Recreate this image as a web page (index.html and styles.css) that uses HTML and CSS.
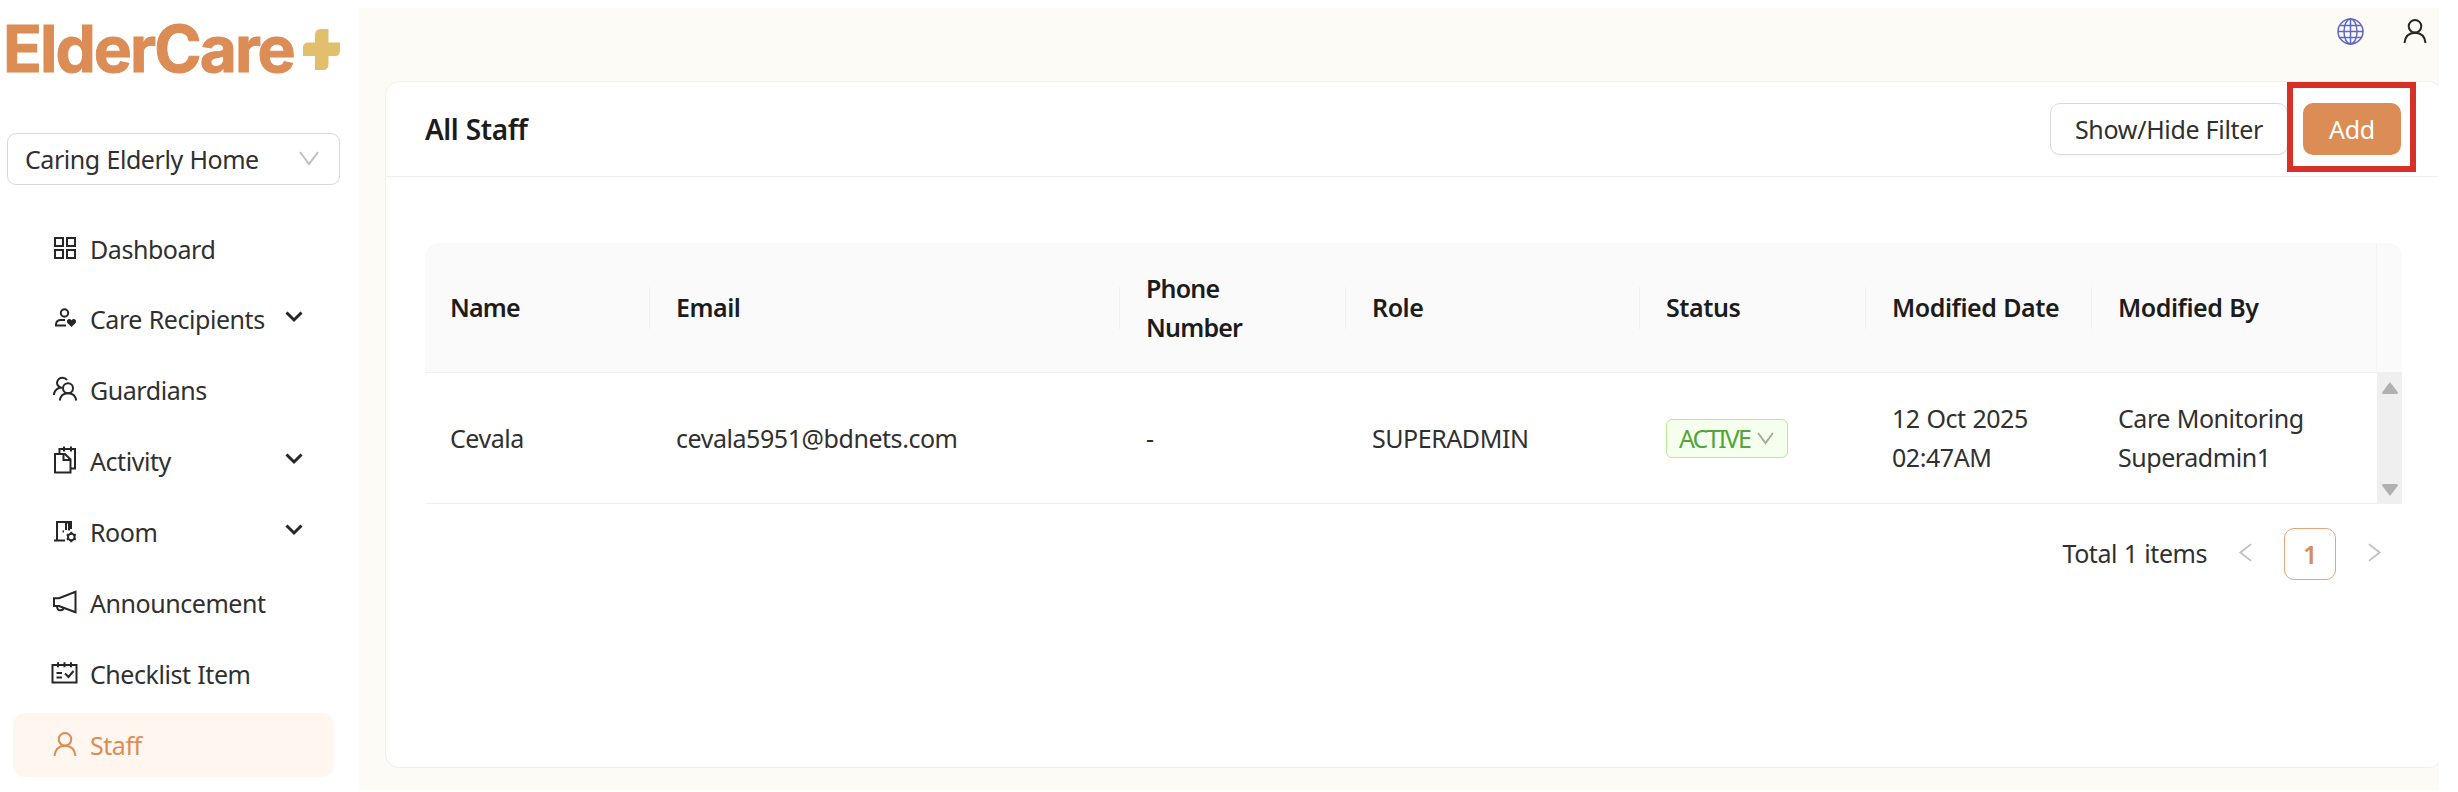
FILE: index.html
```
<!DOCTYPE html>
<html lang="en">
<head>
<meta charset="utf-8">
<title>ElderCare+ | All Staff</title>
<link rel="stylesheet" href="styles.css">
</head>
<body>
<div class="app">
  <aside class="sidebar">
    <div class="logo">
      <span class="logo-word">ElderCare</span>
      <svg class="logo-plus" viewBox="0 0 37 41"><path d="M18 0h7.500v13.500H37V22q0 5-5 5h-6.500v8q0 6-6 6H12V27H0v-8q0-5.500 5.500-5.500H12V6q0-6 6-6z"/></svg>
    </div>
    <div class="home-select">
      <span>Caring Elderly Home</span>
      <svg class="select-arrow" viewBox="0 0 20 14"><path d="M1 1l9 12 9-12"/></svg>
    </div>
    <nav class="menu">
      <a class="item"><svg class="icon" viewBox="0 0 24 24"><path d="M2 2h8v8H2zM14 2h8v8h-8zM2 14h8v8H2zM14 14h8v8h-8z"/></svg><span>Dashboard</span></a>
      <a class="item"><svg class="icon" viewBox="0 0 24 24"><circle cx="11.500" cy="7" r="3.700"/><path d="M13 19.500H3v-1.500q.5-4 5-4h4"/><path class="solid" d="M18.500 21l-4.300-4.200q-1-3.300 1.800-3.800 1.700 0 2.500 1.300.8-1.300 2.500-1.300 2.800.5 1.800 3.800z"/></svg><span>Care Recipients</span><svg class="caret" viewBox="0 0 18 12"><path d="M1.500 1.500L9 9l7.500-7.500"/></svg></a>
      <a class="item"><svg class="icon" viewBox="0 0 24 24"><circle cx="15" cy="11.200" r="5"/><path d="M6.800 23.500q1-7.300 8.200-7.300t8.200 7.300M9 11Q4 9.500 4 5.500 5 .7 9.500.7q3 0 4.500 2.300M.8 18q.5-5.500 6.500-7.500"/></svg><span>Guardians</span></a>
      <a class="item"><svg class="icon tall" viewBox="0 0 24 28"><path d="M2 8h10l5.500 5.500V26.500H2zM10.500 8.500v5.500h6.500M6.500 7.500V3H22v19.500h-4M11 .5v5M18 .5v5"/></svg><span>Activity</span><svg class="caret" viewBox="0 0 18 12"><path d="M1.500 1.500L9 9l7.500-7.500"/></svg></a>
      <a class="item"><svg class="icon" viewBox="0 0 24 24"><path d="M1 21.500h11M4 21.500V3h14v7M12 3.500h4v8M13 3.500v7.500M9.500 12.500h1.500"/><circle cx="18.300" cy="18" r="3.300"/><path d="M18.300 12.800v2M18.300 21.200v2M13.800 15.400l1.700 1M21.100 19.600l1.700 1M13.800 20.600l1.700-1M21.100 16.400l1.700-1"/></svg><span>Room</span><svg class="caret" viewBox="0 0 18 12"><path d="M1.500 1.500L9 9l7.500-7.500"/></svg></a>
      <a class="item"><svg class="icon" viewBox="0 0 24 24"><path d="M1 8.300h5L22.500 1.800v20.400L6 16H1zM4 16q0 4.500 3.500 4.300 3.200 0 3.200-3"/></svg><span>Announcement</span></a>
      <a class="item"><svg class="icon wide" viewBox="0 0 27 22"><path d="M1.500 3h24v17.500h-24zM7 .3v5M13.500 .3v5M20 .3v5M5.500 11h5.500M5.500 15.500h5.500M14 11.500l3.500 3.500 5-6"/></svg><span>Checklist Item</span></a>
      <a class="item active"><svg class="icon" viewBox="0 0 24 24"><circle cx="12" cy="7.300" r="6.300"/><path d="M1.500 24q.8-10 10.500-10.300 9.700.3 10.500 10.300"/></svg><span>Staff</span></a>
    </nav>
  </aside>
  <main class="main">
    <header class="topbar">
      <svg class="globe" viewBox="0 0 27 27"><circle cx="13.500" cy="13.500" r="12.500"/><ellipse cx="13.500" cy="13.500" rx="6.500" ry="12.500"/><path d="M13.500 1v25M1 13.500h25M3 7.500h21M3 19.500h21"/></svg>
      <svg class="icon user" viewBox="0 0 24 24"><circle cx="12" cy="7.300" r="6.300"/><path d="M1.500 24q.8-10 10.500-10.300 9.700.3 10.500 10.300"/></svg>
    </header>
    <section class="card">
      <div class="card-head">
        <h1 class="title">All Staff</h1>
        <button class="btn">Show/Hide Filter</button>
        <button class="btn primary">Add<i class="highlight"></i></button>
      </div>
      <div class="table">
        <div class="row head">
          <div class="cell">Name</div><div class="cell">Email</div><div class="cell tight"><span>Phone<br>Number</span></div><div class="cell">Role</div><div class="cell">Status</div><div class="cell">Modified Date</div><div class="cell last">Modified By</div><div class="gutter"></div>
        </div>
        <div class="row body">
          <div class="cell">Cevala</div><div class="cell">cevala5951@bdnets.com</div><div class="cell">-</div><div class="cell">SUPERADMIN</div>
          <div class="cell"><span class="tag"><span>ACTIVE</span><svg class="tag-arrow" viewBox="0 0 18 14"><path d="M1 1l8 11 8-11"/></svg></span></div>
          <div class="cell"><span>12 Oct 2025<br>02:47AM</span></div><div class="cell"><span>Care Monitoring<br>Superadmin1</span></div>
          <div class="scroll"><svg viewBox="0 0 16 12"><path d="M8 0l8 10.500q0 1.500-1.500 1.500h-13Q0 12 0 10.500z"/></svg><svg class="down" viewBox="0 0 16 12"><path d="M8 0l8 10.500q0 1.500-1.500 1.500h-13Q0 12 0 10.500z"/></svg></div>
        </div>
      </div>
      <div class="pager">
        <span>Total 1 items</span>
        <svg class="prev" viewBox="0 0 14 20"><path d="M13 1L1.500 10 13 19"/></svg>
        <span class="page">1</span>
        <svg class="next" viewBox="0 0 14 20"><path d="M1 1l11.500 9L1 19"/></svg>
      </div>
    </section>
  </main>
</div>
</body>
</html>
```
FILE: styles.css
```
* { box-sizing: border-box; }
body { margin: 0; background: #fff; color: #303030; font: 25px/39px "Noto Sans", "Open Sans", sans-serif; letter-spacing: -0.45px; word-spacing: 0.7px; white-space: nowrap; }
svg { display: block; flex: none; fill: none; overflow: visible; }
.app { display: flex; width: 2458px; height: 792px; overflow: hidden; }
.sidebar { width: 359px; flex: none; padding: 19px 19px 0 7px; }
.logo { display: flex; height: 57px; align-items: center; justify-content: space-between; padding-top: 4px; }
.logo-word { font: 700 64px/57px Inter, sans-serif; letter-spacing: -1.9px; color: #dc8c55; -webkit-text-stroke: 1px #dc8c55; margin: -3px 0 0 -4px; }
.logo-plus { width: 37px; height: 41px; fill: #e2bf6d; }
.home-select { display: flex; align-items: center; justify-content: space-between; height: 52px; margin-top: 57px; padding: 0 20px 0 17px; border: 1.500px solid #d9d9d9; border-radius: 9px; }
.select-arrow { width: 20px; height: 14px; stroke: #bfbfbf; stroke-width: 2; margin-top: -2px; }
.menu { display: flex; flex-direction: column; gap: 6.900px; margin: 32px 6px 0 6px; }
.item { display: flex; align-items: center; height: 64px; padding-left: 40px; border-radius: 12px; }
.icon { width: 24px; height: 24px; margin-right: 13px; margin-top: -3px; stroke: #262626; stroke-width: 2; }
.icon.tall { height: 28px; }
.icon.wide { width: 27px; height: 22px; margin: -3px 12px 0 -2px; }
.solid { fill: #262626; stroke: none; }
.caret { width: 18px; height: 12px; margin-left: auto; margin-right: 31px; margin-top: -6px; stroke: #262626; stroke-width: 3; }
.active { background: #fff6ef; color: #dc8c55; }
.active .icon { stroke: #dc8c55; }
.main { width: 2080px; height: 782px; margin-top: 8px; padding: 0 0 0 26px; background: #fcfbf5; overflow: hidden; flex: none; }
.topbar { display: flex; align-items: flex-start; justify-content: flex-end; height: 73px; padding: 10px 12px 0 0; gap: 39px; }
.globe { width: 27px; height: 27px; stroke: #5d66c9; stroke-width: 1.500; }
.user { margin: 1px 0 0; }
.card { width: 2058px; height: 687px; background: #fff; border: 1.500px solid #f0f0f0; border-radius: 14px; }
.card-head { display: flex; align-items: center; height: 95px; padding: 0 41px 0 39px; border-bottom: 1.500px solid #f0f0f0; gap: 15px; }
.title { margin: 0 auto 0 0; font-size: 28px; font-weight: 600; color: #1c1c1c; }
.btn { font: inherit; letter-spacing: -0.3px; color: #303030; height: 52px; padding: 0; width: 238px; border: 1.500px solid #d9d9d9; border-radius: 10px; background: #fff; box-shadow: 0 3px 0 #fafafa; }
.btn.primary { position: relative; width: 98px; border: 0; background: #dc8c55; color: #fff; box-shadow: none; }
.highlight { position: absolute; inset: -21px -15px -17px -16px; border: 6px solid #d63027; }
.table { width: 1977px; margin: 66px 0 0 39px; }
.row { display: grid; grid-template-columns: 225px 470px 226px 294px 226px 226px 284px 26px; }
.row.head { height: 130px; background: #fafafa; border-radius: 14px 14px 0 0; border-bottom: 1.500px solid #f0f0f0; }
.row.body { height: 131px; border-bottom: 1.500px solid #f0f0f0; }
.cell { display: flex; align-items: center; padding-left: 26px; }
.cell:first-child { padding-left: 25px; }
.head .cell { font-weight: 600; position: relative; color: #1c1c1c; }
.head .tight { letter-spacing: -0.8px; }
.head .cell:first-child { letter-spacing: -0.8px; }
.head .cell:not(.last)::after { content: ""; position: absolute; right: 0; top: 44px; width: 1px; height: 42px; background: #f0f0f0; }
.gutter { border-left: 1px solid #f3f3f3; }
.tag { display: flex; align-items: center; gap: 7px; height: 39px; padding: 0 13px 0 12px; border: 1.500px solid #b7eb8f; border-radius: 6px; background: #f6ffed; color: #52a53a; letter-spacing: -1.95px; }
.tag-arrow { width: 17px; height: 13px; stroke: #a3aa9d; stroke-width: 2; }
.scroll { display: flex; flex-direction: column; justify-content: space-between; align-items: center; padding: 9px 0 7px; margin-left: 1px; background: #efefef; }
.scroll svg { width: 16px; height: 12px; fill: #b0b0b0; }
.down { transform: rotate(180deg); }
.pager { display: flex; align-items: center; justify-content: flex-end; height: 53px; margin-top: 23px; padding-right: 61px; }
.prev, .next { width: 13px; height: 19px; stroke: #c0c0c0; stroke-width: 2; margin-top: -3px; }
.prev { margin-left: 32px; margin-right: 32px; }
.next { margin-left: 32px; }
.page { width: 52px; height: 52px; border: 1.500px solid #e5a57c; border-radius: 10px; line-height: 51px; text-align: center; color: #dc8c55; font-weight: 600; }
```
